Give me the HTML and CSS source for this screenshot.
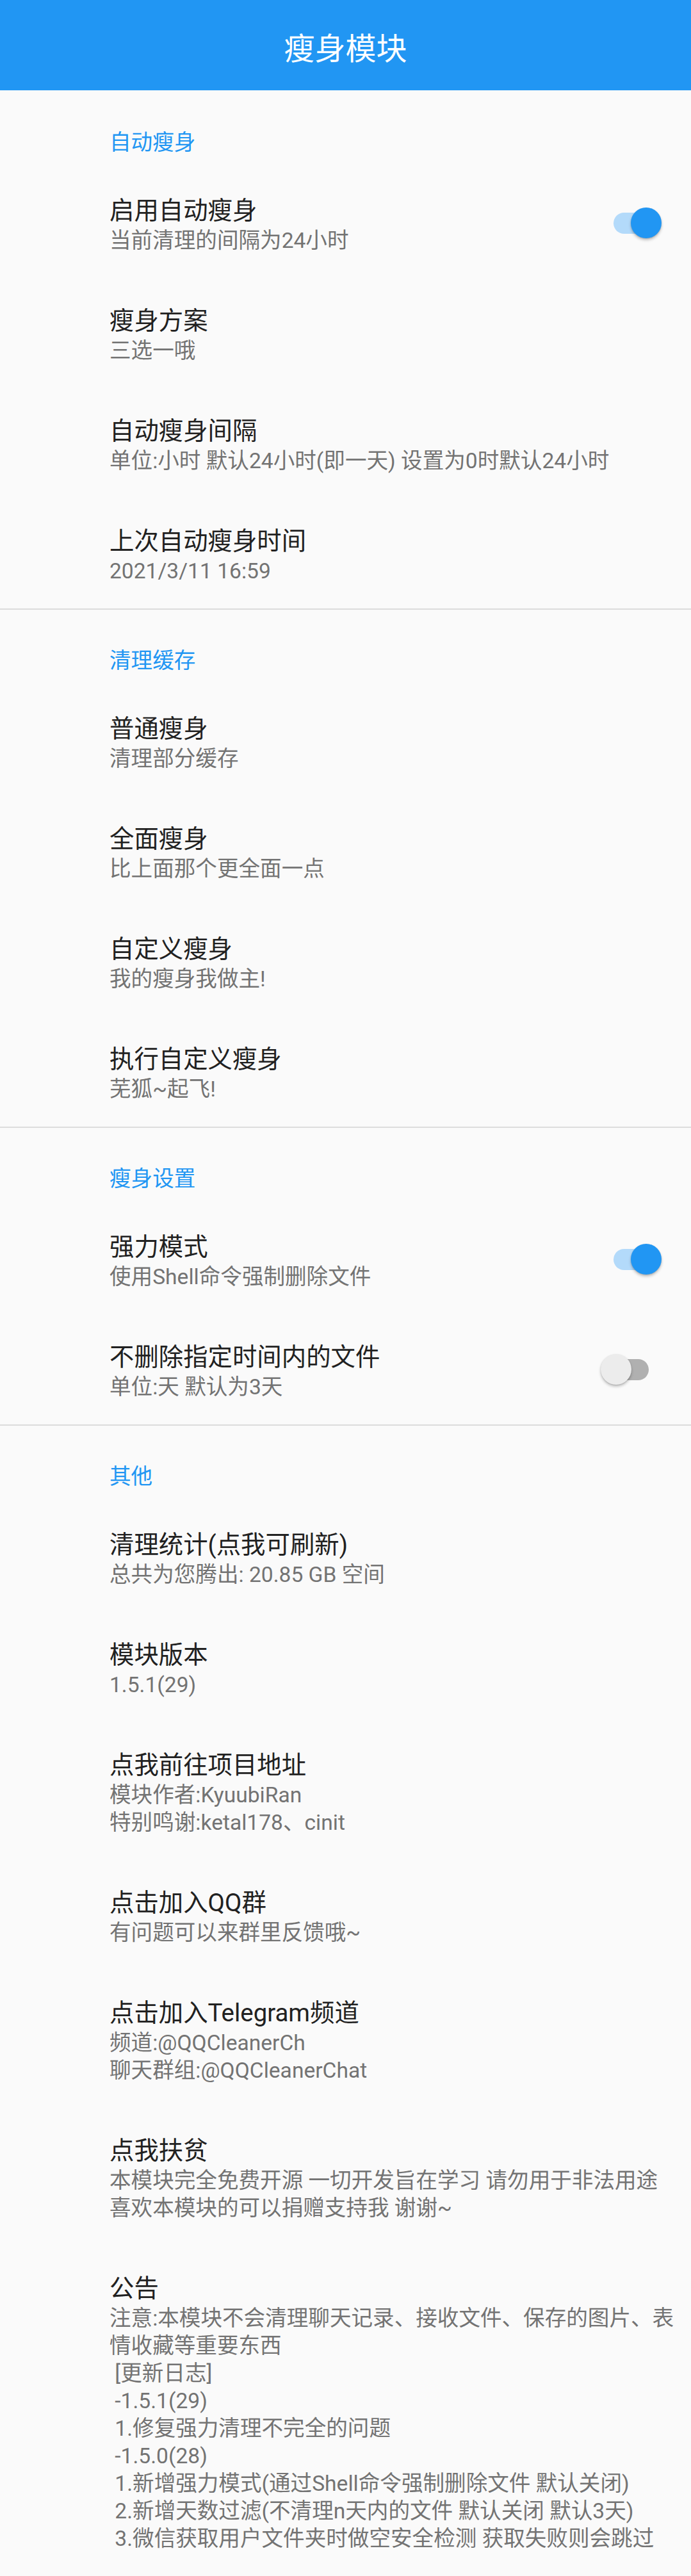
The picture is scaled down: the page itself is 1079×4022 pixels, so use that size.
FILE: index.html
```html
<!DOCTYPE html>
<html lang="zh-CN">
<head>
<meta charset="utf-8">
<title>瘦身模块</title>
<link rel="stylesheet" href="styles.css">
</head>
<body>
<header class="appbar">瘦身模块</header>
<main class="prefs">
  <section class="cat first">
    <div class="cat-title">自动瘦身</div>
    <div class="pref">
      <div class="text"><div class="t">启用自动瘦身</div><div class="s">当前清理的间隔为24小时</div></div>
      <div class="switch on"><span class="track"></span><span class="thumb"></span></div>
    </div>
    <div class="pref">
      <div class="text"><div class="t">瘦身方案</div><div class="s">三选一哦</div></div>
    </div>
    <div class="pref">
      <div class="text"><div class="t">自动瘦身间隔</div><div class="s">单位:小时 默认24小时(即一天) 设置为0时默认24小时</div></div>
    </div>
    <div class="pref">
      <div class="text"><div class="t">上次自动瘦身时间</div><div class="s">2021/3/11 16:59</div></div>
    </div>
  </section>
  <section class="cat">
    <div class="cat-title">清理缓存</div>
    <div class="pref">
      <div class="text"><div class="t">普通瘦身</div><div class="s">清理部分缓存</div></div>
    </div>
    <div class="pref">
      <div class="text"><div class="t">全面瘦身</div><div class="s">比上面那个更全面一点</div></div>
    </div>
    <div class="pref">
      <div class="text"><div class="t">自定义瘦身</div><div class="s">我的瘦身我做主!</div></div>
    </div>
    <div class="pref">
      <div class="text"><div class="t">执行自定义瘦身</div><div class="s">芜狐~起飞!</div></div>
    </div>
  </section>
  <section class="cat">
    <div class="cat-title">瘦身设置</div>
    <div class="pref">
      <div class="text"><div class="t">强力模式</div><div class="s">使用Shell命令强制删除文件</div></div>
      <div class="switch on"><span class="track"></span><span class="thumb"></span></div>
    </div>
    <div class="pref">
      <div class="text"><div class="t">不删除指定时间内的文件</div><div class="s">单位:天 默认为3天</div></div>
      <div class="switch"><span class="track"></span><span class="thumb"></span></div>
    </div>
  </section>
  <section class="cat">
    <div class="cat-title">其他</div>
    <div class="pref">
      <div class="text"><div class="t">清理统计(点我可刷新)</div><div class="s">总共为您腾出: 20.85 GB 空间</div></div>
    </div>
    <div class="pref">
      <div class="text"><div class="t">模块版本</div><div class="s">1.5.1(29)</div></div>
    </div>
    <div class="pref">
      <div class="text"><div class="t">点我前往项目地址</div><div class="s">模块作者:KyuubiRan<br>特别鸣谢:ketal178、cinit</div></div>
    </div>
    <div class="pref">
      <div class="text"><div class="t">点击加入QQ群</div><div class="s">有问题可以来群里反馈哦~</div></div>
    </div>
    <div class="pref">
      <div class="text"><div class="t">点击加入Telegram频道</div><div class="s">频道:@QQCleanerCh<br>聊天群组:@QQCleanerChat</div></div>
    </div>
    <div class="pref">
      <div class="text"><div class="t">点我扶贫</div><div class="s">本模块完全免费开源 一切开发旨在学习 请勿用于非法用途<br>喜欢本模块的可以捐赠支持我 谢谢~</div></div>
    </div>
    <div class="pref">
      <div class="text"><div class="t">公告</div><div class="s">注意:本模块不会清理聊天记录、接收文件、保存的图片、表<br>情收藏等重要东西<br>&nbsp;[更新日志]<br>&nbsp;-1.5.1(29)<br>&nbsp;1.修复强力清理不完全的问题<br>&nbsp;-1.5.0(28)<br>&nbsp;1.新增强力模式(通过Shell命令强制删除文件 默认关闭)<br>&nbsp;2.新增天数过滤(不清理n天内的文件 默认关闭 默认3天)<br>&nbsp;3.微信获取用户文件夹时做空安全检测 获取失败则会跳过</div></div>
    </div>
  </section>
</main>
</body>
</html>
```

FILE: styles.css
```css
html, body {
  margin: 0;
  padding: 0;
}

body {
  background: #fafafa;
  font-family: Roboto, "Noto Sans CJK SC", sans-serif;
}

.appbar {
  height: 141px;
  box-sizing: border-box;
  padding-top: 49px;
  background: #2196f3;
  color: #ffffff;
  font-size: 48px;
  line-height: 56px;
  text-align: center;
}

.cat {
  border-top: 2px solid #dcdcdc;
}

.cat.first {
  border-top-color: transparent;
}

.cat-title {
  padding: 58px 0 18px 171px;
  font-size: 33.6px;
  line-height: 43px;
  color: #2196f3;
}

.pref {
  display: flex;
  align-items: flex-start;
  min-height: 172px;
  box-sizing: border-box;
  padding: 41px 46px 37px 171px;
}

.text {
  flex: 1;
  min-width: 0;
}

.t {
  font-size: 38.4px;
  line-height: 51px;
  color: #212121;
  white-space: nowrap;
}

.s {
  font-size: 33.6px;
  line-height: 43px;
  color: #737373;
  white-space: nowrap;
}

.switch {
  position: relative;
  flex: none;
  width: 96px;
  height: 48px;
  align-self: center;
  margin-top: -4px;
}

.track {
  position: absolute;
  left: 21px;
  top: 7.5px;
  width: 55px;
  height: 33px;
  border-radius: 16.5px;
  background: #b0b0b0;
}

.switch.on .track {
  background: #b3dafa;
}

.thumb {
  position: absolute;
  top: 0;
  left: 1px;
  width: 48px;
  height: 48px;
  border-radius: 50%;
  background: #ececec;
  box-shadow: 0 3px 4px rgba(0, 0, 0, 0.22), 0 1px 2px rgba(0, 0, 0, 0.14);
}

.switch.on .thumb {
  left: 48px;
  background: #2196f3;
}
```
